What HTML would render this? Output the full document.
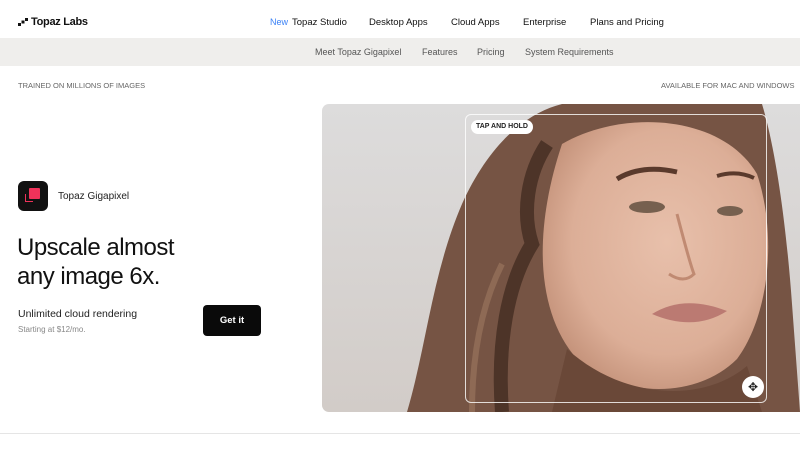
<!DOCTYPE html>
<html><head><style>
*{margin:0;padding:0;box-sizing:border-box}
body{width:800px;height:450px;background:#fff;font-family:"Liberation Sans",sans-serif;color:#111;position:relative;overflow:hidden}
.a{position:absolute;white-space:nowrap}
</style></head><body>
<div class="a" style="left:18px;top:16px;font-size:11px;font-weight:bold;letter-spacing:-0.3px">
<svg width="10" height="8" style="vertical-align:-1px;margin-right:3px" viewBox="0 0 10 8"><rect x="0" y="5" width="3" height="3" fill="#111"/><rect x="3.5" y="2.5" width="3" height="3" fill="#111"/><rect x="7" y="0" width="3" height="3" fill="#111"/></svg>Topaz Labs</div>
<div class="a" style="left:270px;top:17px;font-size:9px;color:#3b82f6">New</div>
<div class="a" style="left:292px;top:17px;font-size:9.5px">Topaz Studio</div>
<div class="a" style="left:369px;top:17px;font-size:9.5px">Desktop Apps</div>
<div class="a" style="left:451px;top:17px;font-size:9.5px">Cloud Apps</div>
<div class="a" style="left:523px;top:17px;font-size:9.5px">Enterprise</div>
<div class="a" style="left:590px;top:17px;font-size:9.5px">Plans and Pricing</div>
<div class="a" style="left:0;top:38px;width:800px;height:28px;background:#efeeec"></div>
<div class="a" style="left:315px;top:47px;font-size:9px;color:#555">Meet Topaz Gigapixel</div>
<div class="a" style="left:422px;top:47px;font-size:9px;color:#555">Features</div>
<div class="a" style="left:477px;top:47px;font-size:9px;color:#555">Pricing</div>
<div class="a" style="left:525px;top:47px;font-size:9px;color:#555">System Requirements</div>
<div class="a" style="left:18px;top:81px;font-size:7.5px;color:#666">TRAINED ON MILLIONS OF IMAGES</div>
<div class="a" style="left:661px;top:81px;font-size:7.5px;color:#666">AVAILABLE FOR MAC AND WINDOWS</div>
<div class="a" style="left:18px;top:181px;width:30px;height:30px;background:#111;border-radius:6px">
<div class="a" style="left:11px;top:7px;width:11px;height:11px;background:#f0325a;border-radius:1px"></div>
<div class="a" style="left:7px;top:13px;width:8px;height:8px;border:1.3px solid #f0325a;border-right:none;border-top:none"></div></div>
<div class="a" style="left:58px;top:191px;font-size:10px;color:#222">Topaz Gigapixel</div>
<div class="a" style="left:17px;top:233px;font-size:24px;line-height:29px;letter-spacing:-0.5px;color:#111">Upscale almost<br>any image 6x.</div>
<div class="a" style="left:18px;top:308px;font-size:10.5px;color:#222">Unlimited cloud rendering</div>
<div class="a" style="left:18px;top:325px;font-size:8px;color:#888">Starting at $12/mo.</div>
<div class="a" style="left:203px;top:305px;width:58px;height:31px;background:#0a0a0a;border-radius:4px;color:#fff;font-size:9.5px;font-weight:bold;text-align:center;line-height:31px">Get it</div>
<div class="a" style="left:322px;top:104px;width:478px;height:308px;border-radius:7px 0 0 7px;overflow:hidden">
<svg width="478" height="308" viewBox="0 0 478 308">
<defs>
<linearGradient id="bg" x1="0" x2="0" y1="0" y2="1"><stop offset="0" stop-color="#dddcdc"/><stop offset="1" stop-color="#d2ccc8"/></linearGradient>
<radialGradient id="sk" cx="0.55" cy="0.45" r="0.6"><stop offset="0" stop-color="#e8c0ab"/><stop offset="0.7" stop-color="#dcae97"/><stop offset="1" stop-color="#c4927a"/></radialGradient>
</defs>
<rect width="478" height="308" fill="url(#bg)"/>
<path d="M85 308 C105 240 110 170 140 100 C165 45 200 10 240 0 L440 0 C455 50 465 130 470 200 L478 308 Z" fill="#765444"/>
<path d="M180 308 C175 240 185 180 210 140 C200 110 205 70 225 40" stroke="#4d3428" stroke-width="14" fill="none"/>
<path d="M150 308 C150 250 160 200 180 160" stroke="#8e6a55" stroke-width="6" fill="none"/>
<path d="M240 40 C300 5 400 10 435 70 C455 130 448 210 415 255 C375 295 300 295 255 255 C215 210 210 130 240 40 Z" fill="url(#sk)"/>
<path d="M245 245 C300 295 380 300 425 262 L440 308 L230 308 Z" fill="#6a4838"/>
<path d="M295 75 Q320 60 355 68" stroke="#5a3a2c" stroke-width="5" fill="none"/>
<path d="M395 72 Q415 66 432 74" stroke="#5a3a2c" stroke-width="4" fill="none"/>
<ellipse cx="325" cy="103" rx="18" ry="6" fill="#76604f"/>
<ellipse cx="408" cy="107" rx="13" ry="5" fill="#76604f"/>
<path d="M355 110 Q368 160 372 170 Q362 180 347 170" stroke="#c08a72" stroke-width="3" fill="none"/>
<path d="M330 210 Q362 190 405 207 Q372 228 330 210 Z" fill="#bb7a72"/>
</svg>
<div class="a" style="left:143px;top:10px;width:302px;height:289px;border:1px solid rgba(255,255,255,0.8);border-radius:6px"></div>
<div class="a" style="left:149px;top:16px;height:14px;padding:0 5px;background:#fff;border-radius:7px;font-size:7px;font-weight:bold;line-height:14px;color:#222">TAP AND HOLD</div>
<div class="a" style="left:420px;top:272px;width:22px;height:22px;background:#fff;border-radius:50%;text-align:center;line-height:22px;font-size:12px;color:#222">✥</div>
</div>
<div class="a" style="left:0;top:433px;width:800px;height:1px;background:#e5e5e5"></div>
</body></html>
